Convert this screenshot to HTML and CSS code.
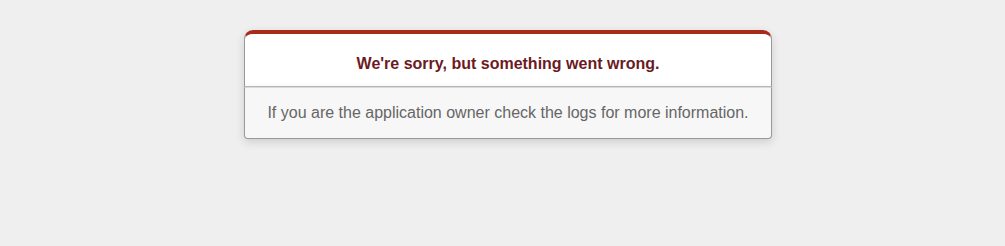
FILE: index.html
```html
<!DOCTYPE html>
<html>
<head>
<meta charset="utf-8">
<title>We're sorry, but something went wrong (500)</title>
<link rel="stylesheet" href="styles.css">
</head>
<body class="error-page">
  <div class="dialog">
    <div class="dialog-head">
      <h1>We're sorry, but something went wrong.</h1>
    </div>
    <p class="dialog-body">If you are the application owner check the logs for more information.</p>
  </div>
</body>
</html>
```

FILE: styles.css
```css
html, body {
  margin: 0;
  padding: 0;
}

.error-page {
  background-color: #EFEFEF;
  color: #2E2F30;
  text-align: center;
  font-family: "Liberation Sans", Arial, sans-serif;
  font-size: 16px;
  padding-left: 11px;
}

.dialog {
  width: 528px;
  margin: 30px auto 0;
}

.dialog-head {
  border: 1px solid #CCC;
  border-right-color: #999;
  border-left-color: #999;
  border-bottom-color: #BBB;
  border-top: #A82A18 solid 4px;
  border-top-left-radius: 9px;
  border-top-right-radius: 9px;
  background-color: #fff;
  padding: 7px 12% 0;
  box-shadow: 0 3px 8px rgba(50, 50, 50, 0.17);
}

.dialog-head h1 {
  font-size: 16px;
  color: #6B1A1F;
  line-height: 24px;
  margin: 10.72px 0;
}

.dialog-body {
  margin: 0 0 16px;
  padding: 16px;
  background-color: #F7F7F7;
  border: 1px solid #999;
  border-top-color: #DADADA;
  border-bottom-left-radius: 4px;
  border-bottom-right-radius: 4px;
  color: #666;
  box-shadow: 0 3px 8px rgba(50, 50, 50, 0.17);
}
```
